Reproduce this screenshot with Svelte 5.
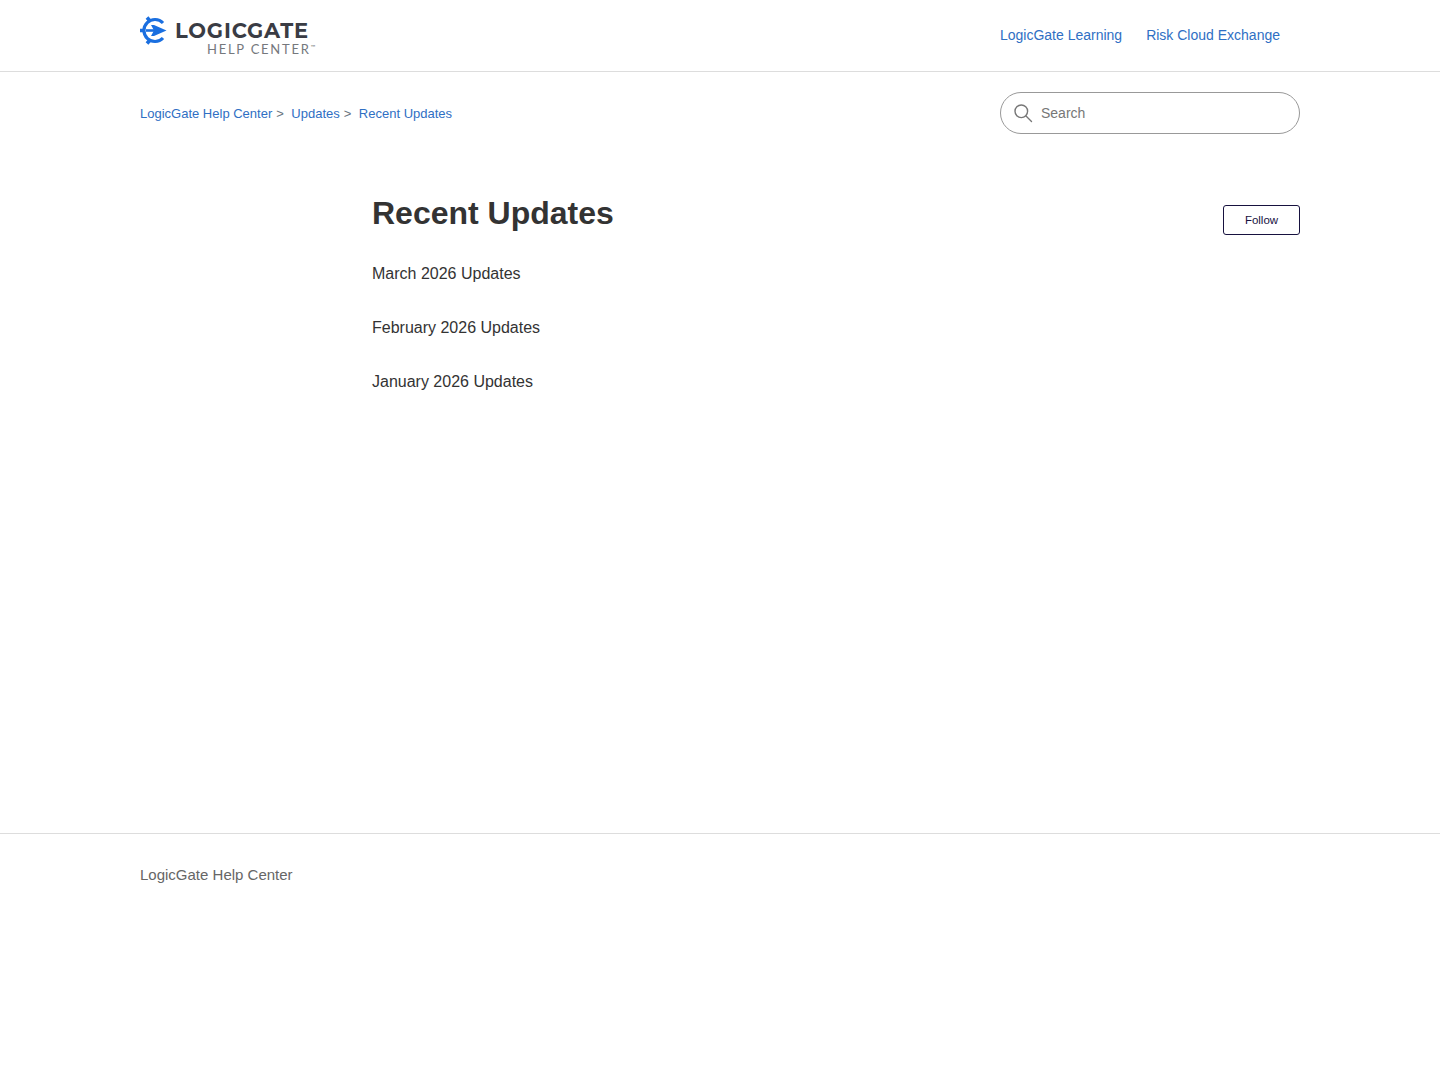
<script>
	const navLinks = ["LogicGate Learning", "Risk Cloud Exchange"];
	const crumbs = ["LogicGate Help Center", "Updates", "Recent Updates"];
	const articles = ["March 2026 Updates", "February 2026 Updates", "January 2026 Updates"];
</script>

<header class="site-header">
	<div class="inner header-row">
		<a class="logo" href="#top">
			<svg width="28" height="30" viewBox="0 0 28 30" fill="none" stroke="#1a6fe0">
				<path d="M24 7 A11 11 0 1 0 24 22" stroke-width="3.2" />
				<path d="M8 1.5 L11 5 M1 14.5 L4.5 14.5 M8 27.5 L11 24" stroke-width="3.6" />
				<path d="M7 14.5 H20" stroke-width="2.6" />
				<path d="M12 9 L15 9 L27.5 14.5 L15 20 L12 20 L15 14.5 Z" fill="#1a6fe0" stroke="none" />
			</svg>
			<span class="logo-text">
				<span class="logo-name">LOGICGATE</span>
				<span class="logo-sub">HELP CENTER<sup>™</sup></span>
			</span>
		</a>
		<nav class="top-nav">
			{#each navLinks as link}
				<a href="#top">{link}</a>
			{/each}
		</nav>
	</div>
</header>

<main class="inner">
	<div class="sub-nav">
		<ol class="breadcrumbs">
			{#each crumbs as crumb, i}
				<li>
					<a href="#top">{crumb}</a>{#if i < crumbs.length - 1}<span class="sep">&gt;</span>{/if}
				</li>
			{/each}
		</ol>
		<label class="search">
			<svg width="20" height="20" viewBox="0 0 20 20" fill="none" stroke="#777" stroke-width="1.4">
				<circle cx="8.3" cy="8.3" r="6.3" />
				<path d="M13 13 L18.5 18.5" stroke-linecap="round" />
			</svg>
			<input type="text" placeholder="Search" />
		</label>
	</div>

	<section class="section">
		<div class="section-head">
			<h1>Recent Updates</h1>
			<button class="follow">Follow</button>
		</div>
		<ul class="article-list">
			{#each articles as article}
				<li><a href="#top">{article}</a></li>
			{/each}
		</ul>
	</section>
</main>

<footer class="site-footer">
	<div class="inner">
		<a href="#top">LogicGate Help Center</a>
	</div>
</footer>

<style>
	:global(body) {
		font-family: "Liberation Sans", Arial, sans-serif;
		color: #333;
		background: #fff;
	}

	a {
		text-decoration: none;
		color: #2f6fc4;
	}

	.inner {
		width: 1160px;
		margin: 0 auto;
	}

	.site-header {
		height: 71px;
		border-bottom: 1px solid #ddd;
	}

	.header-row {
		display: flex;
		justify-content: space-between;
		height: 100%;
	}

	.logo {
		display: flex;
		align-items: flex-start;
		padding-top: 16px;
		gap: 8px;
	}

	.logo svg {
		margin-left: -1px;
	}

	.logo-text {
		display: flex;
		flex-direction: column;
		margin-top: 6px;
		gap: 3px;
	}

	.logo-name {
		font-family: Montserrat, Lato, sans-serif;
		font-weight: 700;
		font-size: 21px;
		line-height: 18px;
		letter-spacing: 0.85px;
		color: #3a3c44;
	}

	.logo-sub {
		font-family: Lato, sans-serif;
		font-size: 13px;
		line-height: 12px;
		letter-spacing: 1.75px;
		color: #75787d;
		margin-left: 32px;
		white-space: nowrap;
	}

	.logo-sub sup {
		font-size: 6px;
		line-height: 0;
		vertical-align: 5px;
		letter-spacing: 0;
	}

	.top-nav {
		display: flex;
		gap: 24px;
		padding: 27px 20px 0 0;
		font-size: 14px;
		line-height: 16px;
	}

	.sub-nav {
		display: flex;
		justify-content: space-between;
		align-items: center;
		padding-top: 20px;
	}

	.breadcrumbs {
		display: flex;
		gap: 7.5px;
		list-style: none;
		margin: 2px 0 0;
		padding: 0;
		font-size: 13px;
		line-height: 16px;
	}

	.sep {
		margin-left: 4px;
		color: #68737d;
	}

	.search {
		box-sizing: border-box;
		width: 300px;
		height: 42px;
		display: flex;
		align-items: center;
		gap: 8px;
		padding: 0 16px 0 12px;
		border: 1px solid #999;
		border-radius: 21px;
	}

	.search svg {
		margin-top: -1px;
		flex: none;
	}

	.search input {
		flex: 1;
		min-width: 0;
		border: 0;
		outline: 0;
		padding: 0;
		font: 14px "Liberation Sans", Arial, sans-serif;
		color: #555;
	}

	.search input::placeholder {
		color: #777;
		opacity: 1;
	}

	.section {
		margin: 58px 0 0 232px;
	}

	.section-head {
		display: flex;
		justify-content: space-between;
		align-items: flex-start;
	}

	h1 {
		margin: 0;
		font-size: 32px;
		line-height: 42px;
		font-weight: 700;
		color: #333;
	}

	.follow {
		box-sizing: border-box;
		width: 77px;
		height: 30px;
		margin-top: 13px;
		padding: 0;
		background: #fff;
		border: 1px solid #17123f;
		border-radius: 3px;
		font: 11.5px "Liberation Sans", Arial, sans-serif;
		color: #17123f;
	}

	.article-list {
		list-style: none;
		margin: 28px 0 0;
		padding: 0;
		display: flex;
		flex-direction: column;
		gap: 32px;
		font-size: 16px;
		line-height: 22px;
	}

	.article-list a {
		color: #333;
	}

	.site-footer {
		position: absolute;
		top: 833px;
		left: 0;
		right: 0;
		border-top: 1px solid #ddd;
		padding-top: 32px;
		font-size: 15px;
		line-height: 18px;
	}

	.site-footer a {
		color: #666;
	}
</style>
